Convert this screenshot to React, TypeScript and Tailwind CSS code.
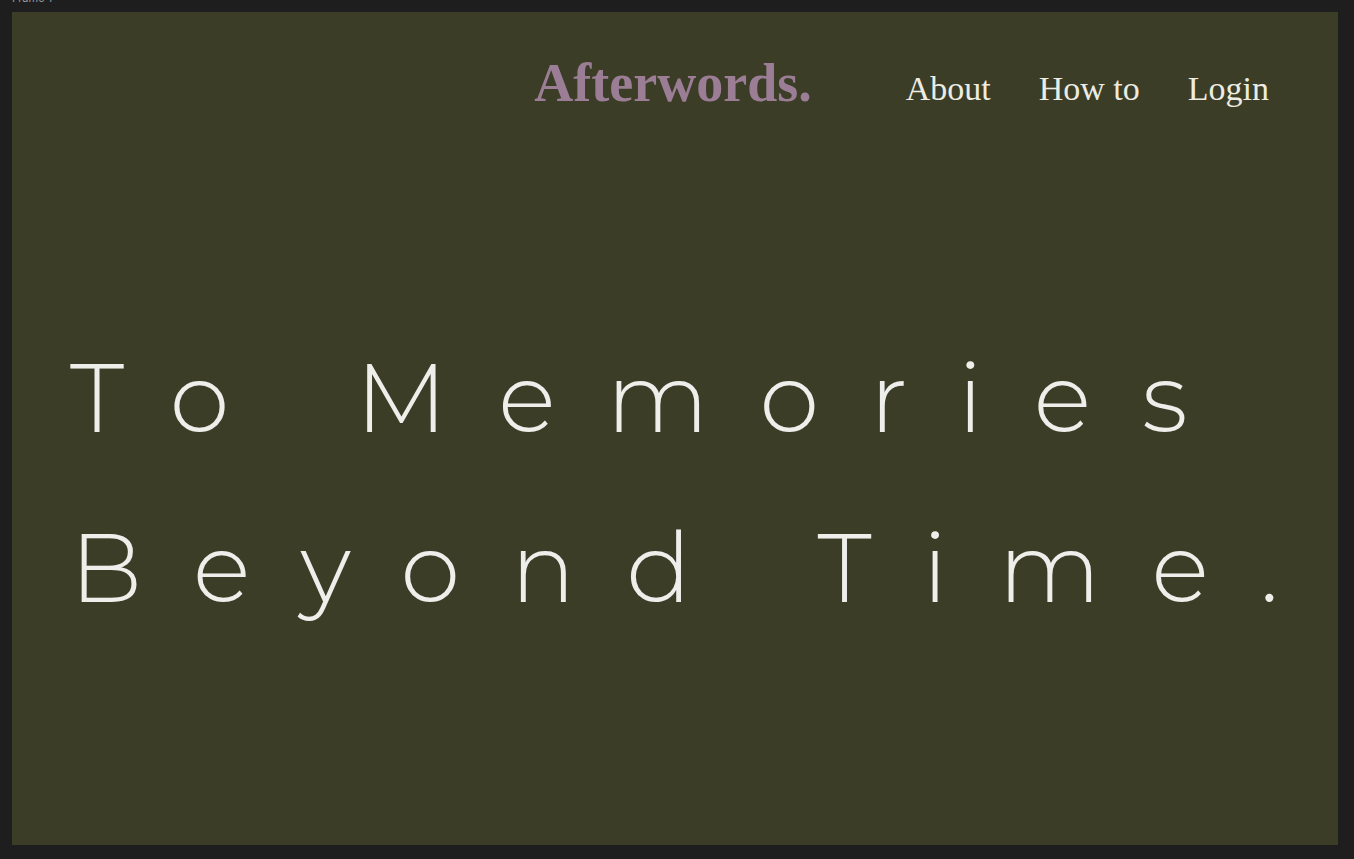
const App = () => {
    return (
        <div className="min-h-screen w-full bg-[#1e1e1e]">
            <div className="h-[12px] overflow-hidden pl-[12px]">
                <span className="-mt-[9px] block text-[11px] leading-[14px] text-[#9a9a9a] font-['Inter',sans-serif]">
                    Frame 1
                </span>
            </div>
            <div className="ml-[12px] h-[833px] w-[1326px] bg-[#3b3d27] flex flex-col">
                <header className="flex flex-row items-baseline justify-end pr-[69px] pt-[44px]">
                    <h1 className="mr-[94px] text-[54px] font-bold leading-none text-[#9b7e96] font-['Liberation_Serif',serif]">
                        Afterwords.
                    </h1>
                    <nav className="-translate-y-[1px] flex flex-row items-baseline gap-[48px] text-[34px] leading-none text-[#ecece2] font-['Liberation_Serif',serif]">
                        <a>About</a>
                        <a>How to</a>
                        <a>Login</a>
                    </nav>
                </header>
                <div className="pl-[58px] pt-[203px] text-[96px] font-light leading-[170px] tracking-[0.53em] text-[#eeeeea] font-['Montserrat','Lato',sans-serif] whitespace-nowrap">
                    <p>To Memories</p>
                    <p>Beyond Time.</p>
                </div>
            </div>
        </div>
    );
};

export default App;
